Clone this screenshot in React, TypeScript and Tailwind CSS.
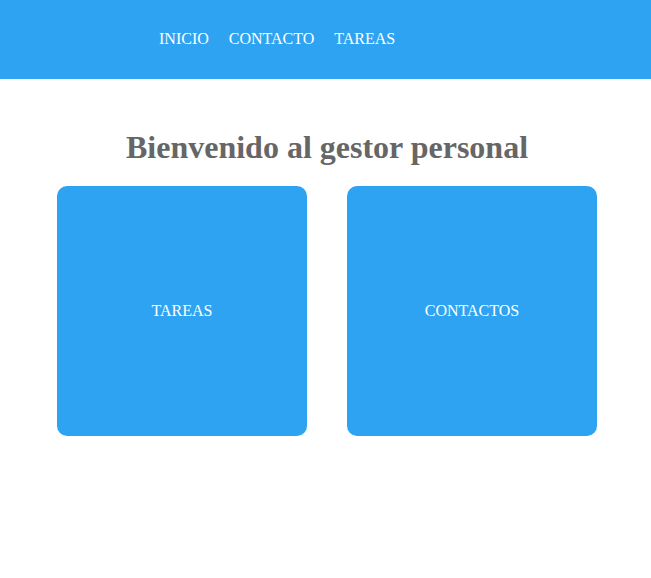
const navLinks = ['INICIO', 'CONTACTO', 'TAREAS'];

const cards = ['TAREAS', 'CONTACTOS'];

export default function App() {
  return (
    <div className="min-h-[578px] bg-white font-['Liberation_Serif',serif]">
      <header className="flex h-[79px] items-start bg-[#2ea3f2] pt-[29px] pl-[159px]">
        <nav className="flex gap-5">
          {navLinks.map((link) => (
            <a key={link} href="#" className="text-base leading-5 text-white">
              {link}
            </a>
          ))}
        </nav>
      </header>

      <main className="ml-[57px] w-[540px]">
        <h1 className="mt-[50px] text-center text-[32px] font-bold leading-[37px] text-[#666666]">
          Bienvenido al gestor personal
        </h1>
        <div className="mt-5 flex gap-10">
          {cards.map((card) => (
            <div
              key={card}
              className="flex h-[250px] w-[250px] items-center justify-center rounded-[10px] bg-[#2ea3f2] text-base text-white"
            >
              {card}
            </div>
          ))}
        </div>
      </main>
    </div>
  );
}
